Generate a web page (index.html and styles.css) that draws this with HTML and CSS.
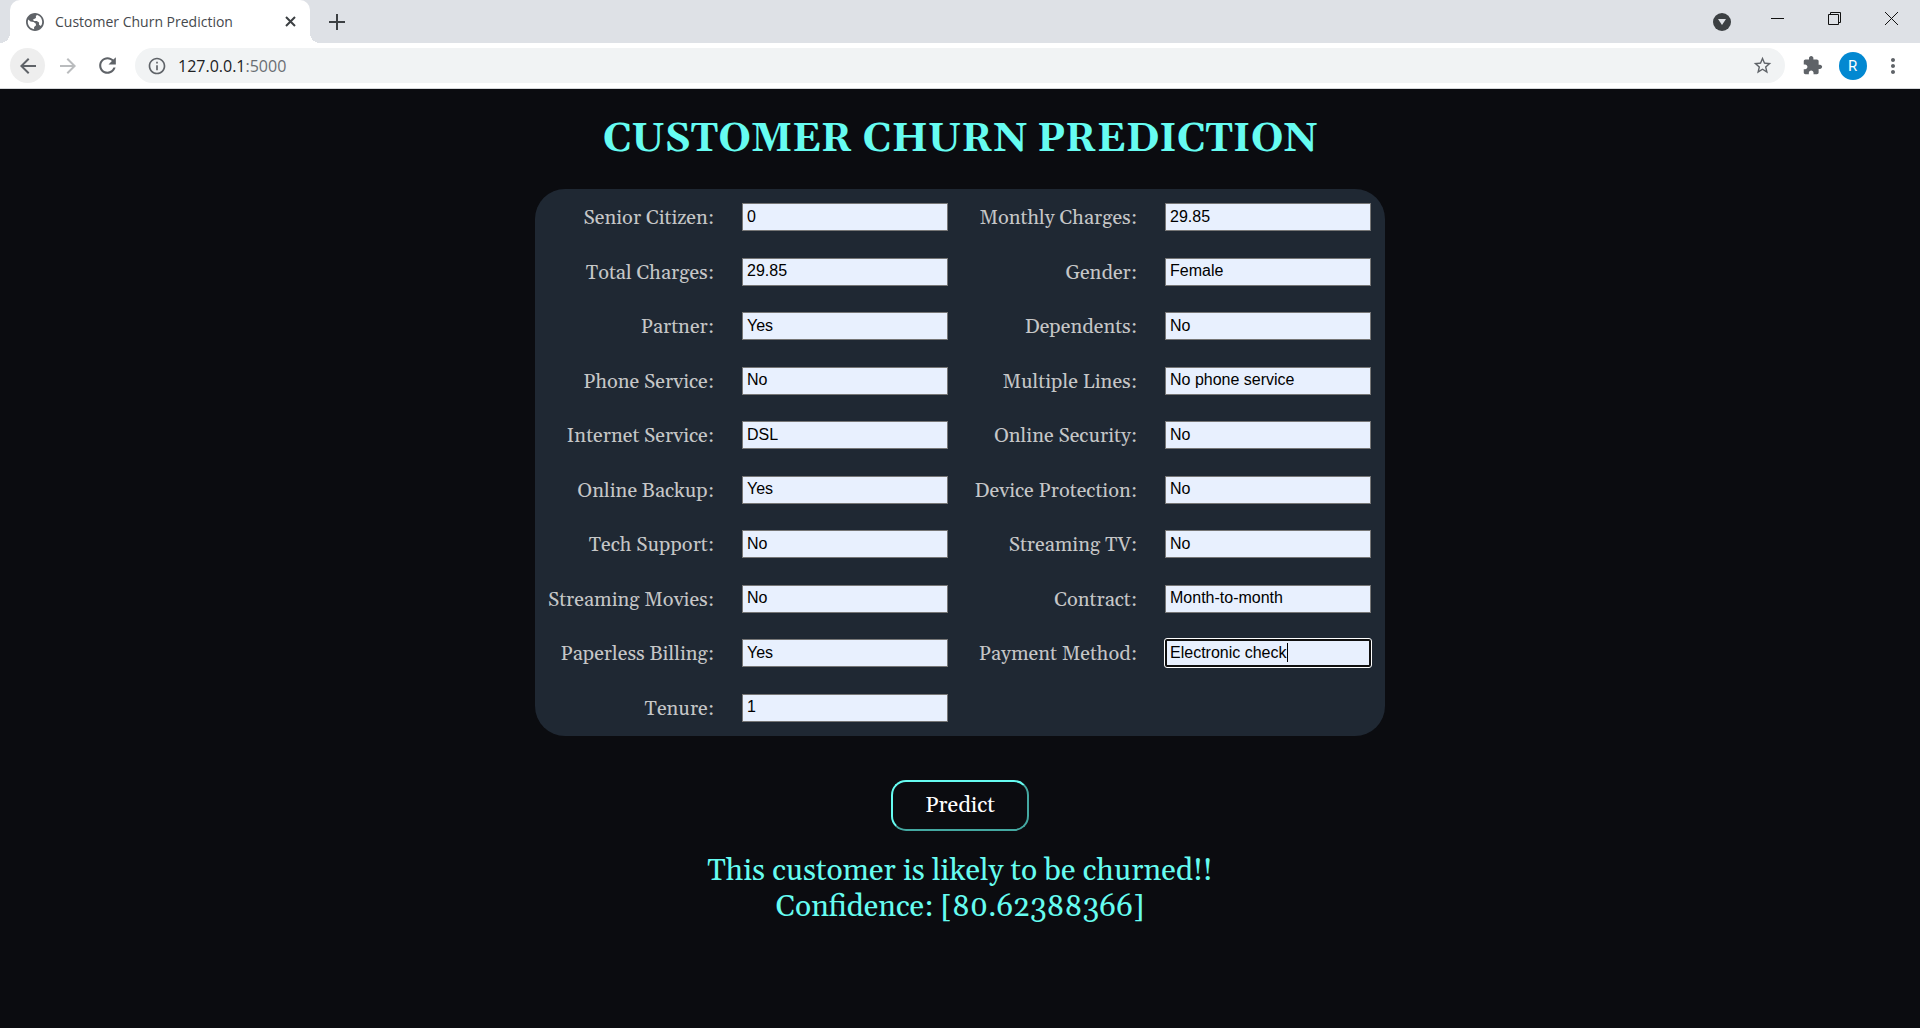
FILE: index.html
```html
<!DOCTYPE html>
<html lang="en">
<head>
<meta charset="utf-8">
<title>Customer Churn Prediction</title>
<link rel="stylesheet" href="styles.css">
</head>
<body>
<header class="browser">
  <div class="tab-strip">
    <div class="tab">
      <svg class="favicon" viewBox="2 2 20 20" width="18" height="18"><path d="M12 2C6.480 2 2 6.480 2 12s4.480 10 10 10 10-4.480 10-10S17.520 2 12 2zM11 19.930c-3.950-.49-7-3.850-7-7.930 0-1 .2-2 .5-2.800L7 11.500l3.500.5 2.500 2v2l-2 1.500zM18.500 16.500l-2-1.500v-2.500L14 11h-3l-1.500-1.500 2-1 1.500-1V5l1.500-.8c3.200 1 5.500 4.100 5.500 7.800 0 1.700-.5 3.200-1.500 4.500z"/></svg>
      <span class="tab-title">Customer Churn Prediction</span>
      <button class="icon-button tab-close" aria-label="Close tab"><svg width="11" height="11" viewBox="0 0 11 11"><path class="line-bold" d="M1 1l9 9M10 1l-9 9"/></svg></button>
    </div>
    <button class="icon-button new-tab" aria-label="New tab"><svg width="16" height="16" viewBox="0 0 16 16"><path class="line-bold" d="M8 0v16M0 8h16"/></svg></button>
    <div class="window-controls">
      <button class="icon-button window-button tab-search" aria-label="Search tabs"><svg width="18" height="18" viewBox="0 0 18 18"><circle class="dark" cx="9" cy="9" r="9"/><path class="pale" d="M5 6h8l-4 6z"/></svg></button>
      <button class="icon-button window-button" aria-label="Minimize"><svg width="13" height="13" viewBox="0 0 13 13"><path class="line-thin" d="M0 6.500h13"/></svg></button>
      <button class="icon-button window-button" aria-label="Restore"><svg width="13" height="13" viewBox="0 0 13 13"><path class="line-thin" d="M.5 2.500h10v10H.5zM2.500 2.500v-2h10v10h-2"/></svg></button>
      <button class="icon-button window-button" aria-label="Close"><svg width="13" height="13" viewBox="0 0 13 13"><path class="line-thin" d="M0 0l13 13M13 0L0 13"/></svg></button>
    </div>
  </div>
  <div class="toolbar">
    <button class="icon-button tool active" aria-label="Back"><svg width="24" height="24" viewBox="0 0 24 24"><path d="M20 11H7.830l5.590-5.590L12 4l-8 8 8 8 1.410-1.410L7.830 13H20v-2z"/></svg></button>
    <button class="icon-button tool faded" aria-label="Forward"><svg width="24" height="24" viewBox="0 0 24 24"><path d="M4 11h12.170l-5.590-5.590L12 4l8 8-8 8-1.410-1.410L16.170 13H4v-2z"/></svg></button>
    <button class="icon-button tool" aria-label="Reload"><svg width="25" height="25" viewBox="0 0 24 24"><path d="M17.650 6.350C16.200 4.900 14.210 4 12 4c-4.420 0-7.990 3.580-7.990 8s3.570 8 7.990 8c3.730 0 6.840-2.550 7.730-6h-2.080c-.82 2.330-3.040 4-5.650 4-3.310 0-6-2.690-6-6s2.690-6 6-6c1.660 0 3.140.69 4.220 1.780L13 11h7V4l-2.350 2.350z"/></svg></button>
    <div class="address-bar">
      <svg width="20" height="20" viewBox="0 0 24 24"><path d="M11 7h2v2h-2zm0 4h2v6h-2zm1-9C6.480 2 2 6.480 2 12s4.480 10 10 10 10-4.480 10-10S17.520 2 12 2zm0 18c-4.410 0-8-3.590-8-8s3.590-8 8-8 8 3.590 8 8-3.590 8-8 8z"/></svg>
      <span class="url">127.0.0.1<span class="port">:5000</span></span>
      <button class="icon-button star" aria-label="Bookmark this tab"><svg width="21" height="21" viewBox="0 0 24 24"><path d="M22 9.240l-7.190-.62L12 2 9.190 8.630 2 9.240l5.460 4.730L5.820 21 12 17.270 18.180 21l-1.630-7.030L22 9.240zM12 15.400l-3.760 2.270 1-4.280-3.320-2.880 4.380-.38L12 6.100l1.710 4.040 4.380.38-3.320 2.880 1 4.280L12 15.400z"/></svg></button>
    </div>
    <button class="icon-button tool" aria-label="Extensions"><svg width="21" height="21" viewBox="0 0 24 24"><path d="M20.500 11H19V7c0-1.100-.9-2-2-2h-4V3.500C13 2.120 11.880 1 10.500 1S8 2.120 8 3.500V5H4c-1.100 0-1.990.9-1.990 2v3.800H3.500c1.490 0 2.700 1.210 2.700 2.700s-1.210 2.700-2.700 2.700H2V20c0 1.100.9 2 2 2h3.800v-1.500c0-1.490 1.210-2.700 2.700-2.700 1.490 0 2.700 1.210 2.700 2.700V22H17c1.100 0 2-.9 2-2v-4h1.500c1.380 0 2.500-1.120 2.500-2.500S21.880 11 20.500 11z"/></svg></button>
    <button class="icon-button tool" aria-label="Profile"><span class="avatar">R</span></button>
    <button class="icon-button tool" aria-label="Menu"><svg width="24" height="24" viewBox="0 0 24 24"><path d="M12 8c1.100 0 2-.9 2-2s-.9-2-2-2-2 .9-2 2 .9 2 2 2zm0 2c-1.100 0-2 .9-2 2s.9 2 2 2 2-.9 2-2-.9-2-2-2zm0 6c-1.100 0-2 .9-2 2s.9 2 2 2 2-.9 2-2-.9-2-2-2z"/></svg></button>
  </div>
</header>
<main class="page">
  <h1 class="title">CUSTOMER CHURN PREDICTION</h1>
  <form class="form">
    <div class="fields">
      <label for="senior">Senior Citizen:</label><input id="senior" type="text" value="0">
      <label for="monthly">Monthly Charges:</label><input id="monthly" type="text" value="29.85">
      <label for="total">Total Charges:</label><input id="total" type="text" value="29.85">
      <label for="gender">Gender:</label><input id="gender" type="text" value="Female">
      <label for="partner">Partner:</label><input id="partner" type="text" value="Yes">
      <label for="dependents">Dependents:</label><input id="dependents" type="text" value="No">
      <label for="phone">Phone Service:</label><input id="phone" type="text" value="No">
      <label for="lines">Multiple Lines:</label><input id="lines" type="text" value="No phone service">
      <label for="internet">Internet Service:</label><input id="internet" type="text" value="DSL">
      <label for="security">Online Security:</label><input id="security" type="text" value="No">
      <label for="backup">Online Backup:</label><input id="backup" type="text" value="Yes">
      <label for="protection">Device Protection:</label><input id="protection" type="text" value="No">
      <label for="support">Tech Support:</label><input id="support" type="text" value="No">
      <label for="tv">Streaming TV:</label><input id="tv" type="text" value="No">
      <label for="movies">Streaming Movies:</label><input id="movies" type="text" value="No">
      <label for="contract">Contract:</label><input id="contract" type="text" value="Month-to-month">
      <label for="billing">Paperless Billing:</label><input id="billing" type="text" value="Yes">
      <label for="payment">Payment Method:</label><div class="field-active"><input id="payment" type="text" value="Electronic check"><span class="caret"></span></div>
      <label for="tenure">Tenure:</label><input id="tenure" type="text" value="1">
    </div>
    <button class="predict" type="submit">Predict</button>
  </form>
  <p class="result">This customer is likely to be churned!!<br>Confidence: [80.62388366]</p>
</main>
</body>
</html>
```
FILE: styles.css
```css
* { box-sizing: border-box; }

body {
  margin: 0;
  min-height: 100vh;
  display: flex;
  flex-direction: column;
  background: #0b0c10;
  font-family: Georgia, Gelasio, "Liberation Serif", serif;
}

/* Browser frame */
.browser {
  background: #fff;
  border-bottom: 1px solid #d5d7da;
  font-family: "Open Sans", "Noto Sans", sans-serif;
}

.tab-strip {
  display: flex;
  height: 43px;
  padding-left: 10px;
  background: #dee1e6;
}

.tab {
  position: relative;
  display: flex;
  align-items: center;
  width: 300px;
  padding: 0 11px 0 16px;
  background: #fff;
  border-radius: 10px 10px 0 0;
}

.tab::before,
.tab::after {
  content: "";
  position: absolute;
  bottom: 0;
  width: 10px;
  height: 10px;
}

.tab::before {
  right: 100%;
  background: radial-gradient(circle at 0 0, #dee1e6 10px, #fff 10px);
}

.tab::after {
  left: 100%;
  background: radial-gradient(circle at 100% 0, #dee1e6 10px, #fff 10px);
}

.tab-title {
  flex: 1;
  padding-left: 11px;
  font-size: 14px;
  line-height: 20px;
  color: #45494d;
  white-space: nowrap;
}

.icon-button {
  display: flex;
  align-items: center;
  justify-content: center;
  padding: 0;
  border: 0;
  background: none;
}

svg { display: block; fill: #5f6368; }
.tab-close { width: 18px; height: 18px; }
.new-tab { width: 54px; }
.line-bold { fill: none; stroke: #3c4043; stroke-width: 2; }
.line-thin { fill: none; stroke: #111; stroke-width: 1; }
.dark { fill: #3c4043; }
.pale { fill: #dee1e6; }

.window-controls {
  display: flex;
  margin-left: auto;
}

.window-button {
  width: 57px;
  height: 37px;
}

.tab-search {
  width: 55px;
  height: 43px;
}

.toolbar {
  display: flex;
  align-items: center;
  gap: 5px;
  height: 45px;
  padding: 0 10px;
}

.tool {
  width: 35px;
  height: 35px;
  border-radius: 50%;
}

.active { background: #eee; }
.faded svg { fill: #babcbe; }

.address-bar {
  flex: 1;
  display: flex;
  align-items: center;
  height: 35px;
  margin: 0 5px;
  padding: 0 12px;
  border-radius: 18px;
  background: #f1f3f4;
}

.url {
  padding-left: 11px;
  font-size: 16px;
  color: #202124;
}

.port { color: #6a6e73; }
.star { margin-left: auto; }

.avatar {
  width: 28px;
  height: 28px;
  border-radius: 50%;
  background: #0288d1;
  color: #fff;
  font: 15px/28px Roboto, sans-serif;
  text-align: center;
}

/* Prediction page */
.page {
  flex: 1;
  padding: 26px 20px;
  text-align: center;
}

.title {
  margin: 0 0 24px;
  font-size: 40px;
  line-height: 50px;
  color: #66fcf1;
}

.form {
  display: flex;
  flex-direction: column;
  align-items: center;
}

.fields {
  display: grid;
  grid-template-columns: 165px 206px 161px 206px;
  grid-auto-rows: 1fr;
  align-items: center;
  column-gap: 28px;
  min-height: 547px;
  padding: 1px 14px;
  border-radius: 30px;
  background: #1f2833;
}

.fields label {
  justify-self: end;
  padding-top: 2px;
  font-size: 20px;
  line-height: 26px;
  color: #c5c6c7;
  white-space: nowrap;
}

.fields input {
  display: block;
  width: 100%;
  height: 28px;
  padding: 0 4px 1px;
  border: 1px solid #767676;
  border-radius: 0;
  background: #e8f0fe;
  color: #000;
  font: 16px "Liberation Sans", Arial, sans-serif;
}

.field-active { position: relative; }

.fields .field-active input {
  border: 2px solid #101010;
  border-radius: 2px;
  padding: 0 3px 1px;
  outline: 1px solid #fff;
}

.caret {
  position: absolute;
  top: 4px;
  left: 122px;
  width: 1px;
  height: 19px;
  background: #000;
}

.predict {
  margin-top: 44px;
  width: 138px;
  height: 51px;
  border: 2px outset #66fcf1;
  border-radius: 15px;
  background: transparent;
  color: #fff;
  font-family: inherit;
  font-size: 22px;
}

.result {
  margin: 22px 0 0;
  font-size: 30px;
  line-height: 36px;
  color: #66fcf1;
}
```
